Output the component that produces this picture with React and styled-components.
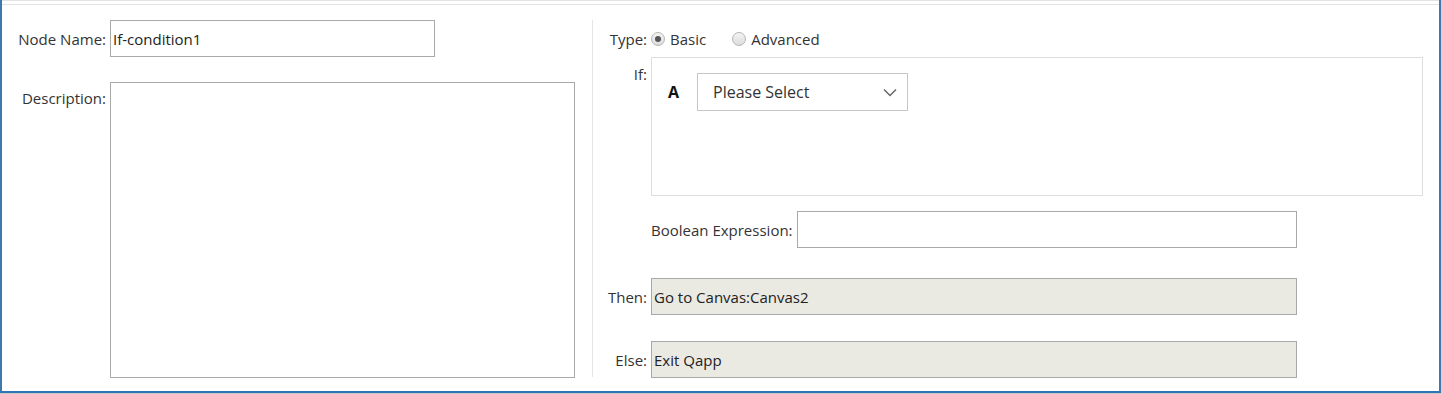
import React from "react";
import styled, { createGlobalStyle } from "styled-components";

const Global = createGlobalStyle`
  html, body { margin: 0; padding: 0; background: #ffffff; }
  body { font-family: "Open Sans", "Segoe UI", sans-serif; font-size: 15px; color: #333; }
  * { box-sizing: border-box; }
`;

const Outer = styled.div`
  width: 1441px;
  height: 394px;
  border-bottom: 1px solid #c8c8c8;
`;

const Frame = styled.div`
  width: 1441px;
  height: 393px;
  border-left: 2px solid #3f78ac;
  border-right: 2px solid #3f78ac;
  border-bottom: 2px solid #2f74b5;
  display: flex;
  flex-direction: column;
  background: #fff;
  overflow: hidden;
`;

const TopRule = styled.div`
  height: 5px;
  flex: none;
  border-top: 1px solid #e2e2e2;
  border-bottom: 1px solid #e2e2e2;
`;

const Body = styled.div`
  display: flex;
  padding-top: 15px;
`;

const LeftCol = styled.div`
  width: 590px;
  padding-right: 16px;
  display: grid;
  grid-template-columns: 104px 1fr;
  column-gap: 4px;
  row-gap: 25px;
  align-content: start;
`;

const Label = styled.label`
  text-align: right;
  white-space: nowrap;
  color: #333;
  font-size: 15px;
  align-self: ${(p) => (p.$top ? "start" : "center")};
  padding-top: ${(p) => p.$pt || 0}px;
`;

const TextInput = styled.div`
  height: 37px;
  width: ${(p) => p.$w}px;
  border: 1px solid #a9a9a9;
  background: ${(p) => (p.$disabled ? "#eae9e2" : "#fff")};
  display: flex;
  align-items: center;
  padding-left: 2px;
  font-size: 15px;
  color: #222;
`;

const TextArea = styled.div`
  width: 465px;
  height: 296px;
  border: 1px solid #a9a9a9;
  background: #fff;
`;

const Divider = styled.div`
  width: 1px;
  height: 357px;
  background: #e4e4e4;
`;

const RightCol = styled.div`
  flex: 1;
  padding-right: 16px;
  display: grid;
  grid-template-columns: 54px 1fr;
  column-gap: 4px;
  align-content: start;
`;

const TypeRow = styled.div`
  height: 37px;
  display: flex;
  align-items: center;
`;

const RadioOpt = styled.span`
  display: inline-flex;
  align-items: center;
  gap: 5px;
  margin-right: 26px;
  color: #333;
`;

const RadioDot = styled.span`
  width: 14px;
  height: 14px;
  border-radius: 50%;
  border: 1px solid #b5b5b5;
  background: linear-gradient(#f4f4f4, #dcdcdc);
  display: inline-flex;
  align-items: center;
  justify-content: center;
  &::after {
    content: "";
    width: 6px;
    height: 6px;
    border-radius: 50%;
    background: ${(p) => (p.$checked ? "#555" : "transparent")};
  }
`;

const CondBox = styled.div`
  height: 139px;
  border: 1px solid #dedede;
  padding: 15px 0 0 16px;
  display: flex;
  align-items: flex-start;
`;

const Letter = styled.span`
  font-weight: 700;
  font-size: 16px;
  color: #111;
  width: 29px;
  height: 38px;
  line-height: 38px;
`;

const Select = styled.div`
  width: 211px;
  height: 38px;
  border: 1px solid #c6c6c6;
  display: flex;
  align-items: center;
  justify-content: space-between;
  padding: 0 10px 0 15px;
  font-size: 16px;
  color: #333;
`;

const BoolRow = styled.div`
  grid-column: 2;
  display: flex;
  align-items: center;
  gap: 4px;
  margin-top: 15px;
`;

const Spacer = styled.div`
  margin-top: ${(p) => p.$h}px;
`;

function Chevron() {
  return (
    <svg width="14" height="9" viewBox="0 0 14 9" aria-hidden="true">
      <polyline points="1,1.5 7,7.5 13,1.5" fill="none" stroke="#666" strokeWidth="1.5" />
    </svg>
  );
}

export default function App() {
  return (
    <>
      <Global />
      <Outer>
        <Frame>
          <TopRule />
          <Body>
            <LeftCol>
              <Label>Node Name:</Label>
              <TextInput $w={325}>If-condition1</TextInput>
              <Label $top $pt={6}>Description:</Label>
              <TextArea />
            </LeftCol>
            <Divider />
            <RightCol>
              <Label>Type:</Label>
              <TypeRow>
                <RadioOpt>
                  <RadioDot $checked />
                  Basic
                </RadioOpt>
                <RadioOpt>
                  <RadioDot />
                  Advanced
                </RadioOpt>
              </TypeRow>
              <Label $top $pt={7}>If:</Label>
              <CondBox>
                <Letter>A</Letter>
                <Select>
                  Please Select
                  <Chevron />
                </Select>
              </CondBox>
              <BoolRow>
                <Label>Boolean Expression:</Label>
                <TextInput $w={500} />
              </BoolRow>
              <Label>
                <Spacer $h={30} />
                Then:
              </Label>
              <Spacer $h={30}>
                <TextInput $w={646} $disabled>Go to Canvas:Canvas2</TextInput>
              </Spacer>
              <Label>
                <Spacer $h={26} />
                Else:
              </Label>
              <Spacer $h={26}>
                <TextInput $w={646} $disabled>Exit Qapp</TextInput>
              </Spacer>
            </RightCol>
          </Body>
        </Frame>
      </Outer>
    </>
  );
}
